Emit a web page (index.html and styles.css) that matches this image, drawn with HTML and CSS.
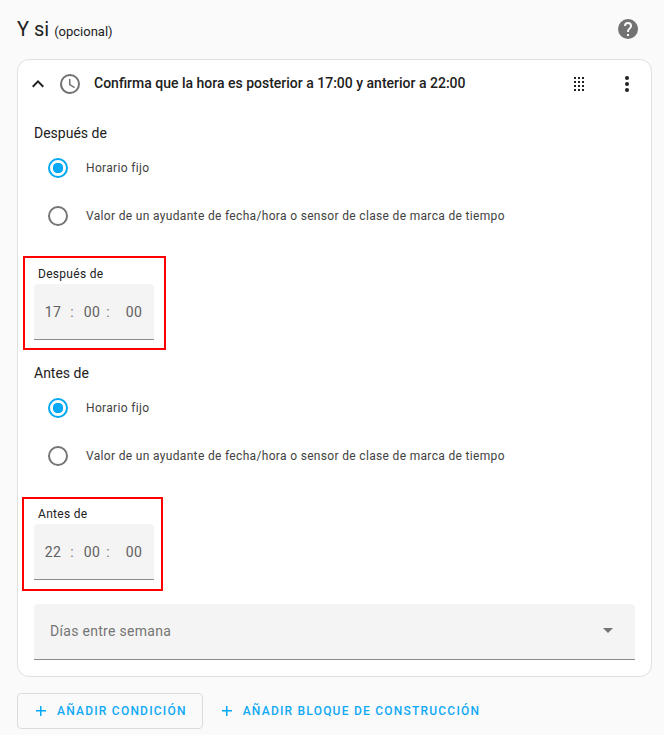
FILE: index.html
```html
<!DOCTYPE html>
<html lang="es">
<head>
    <meta charset="UTF-8">
    <meta name="viewport" content="width=device-width, initial-scale=1.0">
    <title>Y si</title>
    <link rel="stylesheet" href="styles.css">
</head>
<body>
    <div class="section-header">
        <h2 class="section-title">Y si <span class="optional">(opcional)</span></h2>
        <svg class="help-icon" width="24" height="24" viewBox="0 0 24 24"><path d="M15.07,11.25L14.17,12.17C13.45,12.89 13,13.5 13,15H11V14.5C11,13.39 11.45,12.39 12.17,11.67L13.41,10.41C13.78,10.05 14,9.55 14,9C14,7.89 13.1,7 12,7A2,2 0 0,0 10,9H8A4,4 0 0,1 12,5A4,4 0 0,1 16,9C16,9.88 15.64,10.67 15.07,11.25M13,19H11V17H13M12,2A10,10 0 0,0 2,12A10,10 0 0,0 12,22A10,10 0 0,0 22,12C22,6.47 17.5,2 12,2Z"/></svg>
    </div>

    <div class="card">
        <div class="card-header">
            <svg class="chevron" width="24" height="24" viewBox="0 0 24 24"><path d="M7.41,15.41L12,10.83L16.59,15.41L18,14L12,8L6,14L7.41,15.41Z"/></svg>
            <svg class="clock" width="24" height="24" viewBox="0 0 24 24"><path d="M12,20A8,8 0 0,0 20,12A8,8 0 0,0 12,4A8,8 0 0,0 4,12A8,8 0 0,0 12,20M12,2A10,10 0 0,1 22,12A10,10 0 0,1 12,22C6.47,22 2,17.5 2,12A10,10 0 0,1 12,2M12.5,7V12.25L17,14.92L16.25,16.18L11,13V7H12.5Z"/></svg>
            <span class="card-title">Confirma que la hora es posterior a 17:00 y anterior a 22:00</span>
            <svg class="drag" width="24" height="24" viewBox="0 0 24 24"><path d="M7,19V17H9V19H7M11,19V17H13V19H11M15,19V17H17V19H15M7,15V13H9V15H7M11,15V13H13V15H11M15,15V13H17V15H15M7,11V9H9V11H7M11,11V9H13V11H11M15,11V9H17V11H15M7,7V5H9V7H7M11,7V5H13V7H11M15,7V5H17V7H15Z"/></svg>
            <svg class="more" width="24" height="24" viewBox="0 0 24 24"><path d="M12,16A2,2 0 0,1 14,18A2,2 0 0,1 12,20A2,2 0 0,1 10,18A2,2 0 0,1 12,16M12,10A2,2 0 0,1 14,12A2,2 0 0,1 12,14A2,2 0 0,1 10,12A2,2 0 0,1 12,10M12,4A2,2 0 0,1 14,6A2,2 0 0,1 12,8A2,2 0 0,1 10,6A2,2 0 0,1 12,4Z"/></svg>
        </div>

        <div class="card-body">
            <div class="group-label">Después de</div>
            <div class="radio-row"><span class="radio checked"></span><span class="radio-text">Horario fijo</span></div>
            <div class="radio-row"><span class="radio"></span><span class="radio-text">Valor de un ayudante de fecha/hora o sensor de clase de marca de tiempo</span></div>

            <div class="mark mark-first">
                <div class="time-label">Después de</div>
                <div class="time-field">
                    <span class="time-num">17</span><span class="time-sep">:</span><span class="time-num time-min">00</span><span class="time-sep time-sep-last">:</span><span class="time-num time-sec">00</span>
                </div>
            </div>

            <div class="group-label group-second">Antes de</div>
            <div class="radio-row"><span class="radio checked"></span><span class="radio-text">Horario fijo</span></div>
            <div class="radio-row"><span class="radio"></span><span class="radio-text">Valor de un ayudante de fecha/hora o sensor de clase de marca de tiempo</span></div>

            <div class="mark mark-second">
                <div class="time-label">Antes de</div>
                <div class="time-field">
                    <span class="time-num">22</span><span class="time-sep">:</span><span class="time-num time-min">00</span><span class="time-sep time-sep-last">:</span><span class="time-num time-sec">00</span>
                </div>
            </div>

            <div class="select-field">
                <span class="select-text">Días entre semana</span>
                <span class="select-arrow"></span>
            </div>
        </div>
    </div>

    <div class="actions">
        <div class="btn btn-outlined"><span class="plus"></span>Añadir condición</div>
        <div class="btn"><span class="plus"></span>Añadir bloque de construcción</div>
    </div>
</body>
</html>
```
FILE: styles.css
```css
* {
    box-sizing: border-box;
}
html, body {
    height: 735px;
    overflow: hidden;
}
body {
    margin: 0;
    padding: 0 12px 0 17px;
    font-family: Roboto, sans-serif;
    background-color: #fafafa;
    color: #212121;
}
.section-header {
    height: 59px;
    padding: 0 12px 1px 0;
    display: flex;
    align-items: center;
    justify-content: space-between;
}
.section-title {
    margin: 0;
    font-size: 20px;
    font-weight: 400;
    color: #212121;
}
.optional {
    font-size: 13px;
}
.help-icon {
    fill: #727272;
}
.card {
    background-color: white;
    border: 1px solid #e0e0e0;
    border-radius: 12px;
    height: 618px;
}
.card-header {
    height: 48px;
    display: flex;
    align-items: center;
    padding-left: 8px;
}
.chevron {
    fill: #212121;
}
.clock {
    fill: #727272;
    margin-left: 8px;
}
.card-title {
    margin: 0 0 2px 12px;
    font-size: 14px;
    font-weight: 500;
    flex-grow: 1;
}
.drag {
    fill: #212121;
    margin-right: 24px;
}
.more {
    fill: #212121;
    margin-right: 12px;
}
.card-body {
    padding: 0 16px;
}
.group-label {
    margin-top: 15px;
    font-size: 14px;
    line-height: 21px;
}
.group-second {
    margin-top: 13px;
}
.radio-row {
    height: 48px;
    display: flex;
    align-items: center;
    padding-left: 14px;
    font-size: 12px;
    letter-spacing: 0.33px;
}
.radio {
    width: 20px;
    height: 20px;
    border: 2px solid #757575;
    border-radius: 50%;
    margin-right: 18px;
    flex-shrink: 0;
}
.radio.checked {
    border-color: #03a9f4;
    background: radial-gradient(circle, #03a9f4 5px, white 5.5px);
}
.radio-text {
    color: #424242;
}
.mark {
    border: 2px solid red;
    margin-left: -11px;
    padding-left: 9px;
    height: 94px;
}
.mark-first {
    width: 143px;
    margin-top: 16px;
}
.mark-second {
    width: 141px;
    margin-left: -12px;
    padding-left: 10px;
    margin-top: 17px;
}
.time-label {
    height: 26px;
    padding: 8px 0 0 4px;
    font-size: 12px;
    line-height: 16px;
    letter-spacing: 0.3px;
}
.mark-second .time-label {
    height: 25px;
    padding-top: 7px;
}
.time-field {
    width: 120px;
    height: 56px;
    background-color: #f4f4f4;
    border-bottom: 1px solid #8a8a8a;
    border-radius: 4px 4px 0 0;
    display: flex;
    align-items: center;
    font-size: 14px;
    color: #616161;
    letter-spacing: 0.3px;
}
.time-num {
    width: 38px;
    text-align: center;
}
.time-min {
    width: 36px;
}
.time-sec {
    width: 40px;
    margin-left: 4px;
}
.time-sep {
    width: 4px;
    margin-left: -2px;
    text-align: center;
    color: #757575;
}
.time-sep-last {
    margin-left: -4px;
}
.select-field {
    margin-top: 13px;
    height: 56px;
    background-color: #f4f4f4;
    border-bottom: 1px solid #8a8a8a;
    border-radius: 4px 4px 0 0;
    display: flex;
    align-items: center;
    justify-content: space-between;
    padding: 0 22px 2px 16px;
}
.select-text {
    font-size: 14px;
    letter-spacing: 0.3px;
    color: #757575;
}
.select-arrow {
    border-left: 5px solid transparent;
    border-right: 5px solid transparent;
    border-top: 5px solid #757575;
}
.actions {
    margin-top: 16px;
    display: flex;
}
.btn {
    height: 36px;
    padding: 0 15px 0 18px;
    display: flex;
    align-items: center;
    font-size: 12px;
    font-weight: 500;
    letter-spacing: 1.22px;
    text-transform: uppercase;
    color: #0fa9f5;
    border: 1px solid transparent;
    border-radius: 4px;
}
.btn-outlined {
    border-color: #dcdcdc;
}
.plus {
    width: 10px;
    height: 10px;
    margin-right: 11px;
    background:
        linear-gradient(#03a9f4, #03a9f4) center / 10px 1.5px no-repeat,
        linear-gradient(#03a9f4, #03a9f4) center / 1.5px 10px no-repeat;
}
```
